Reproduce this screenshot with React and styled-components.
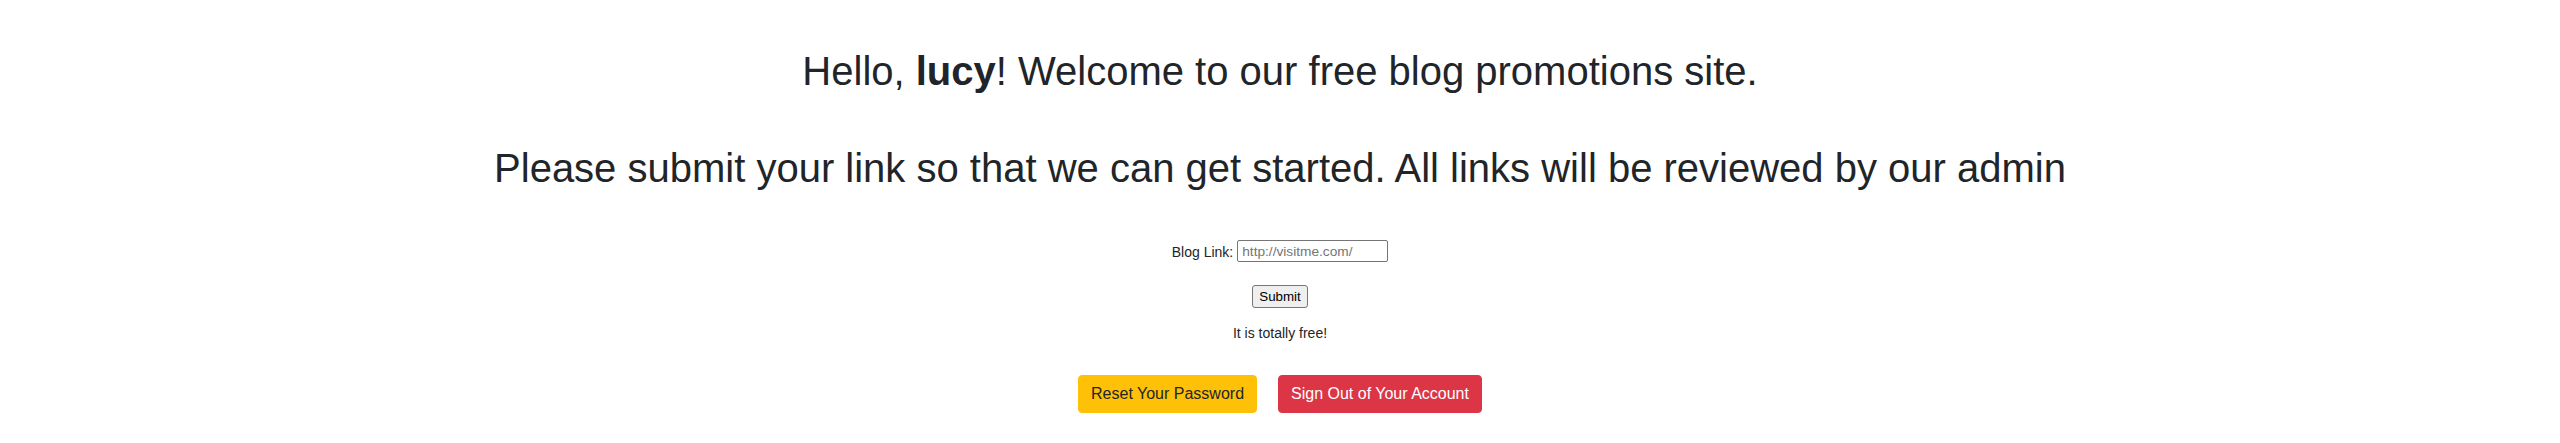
import React, { useState } from "react";
import styled, { createGlobalStyle } from "styled-components";

const GlobalStyle = createGlobalStyle`
  body {
    margin: 0;
    background: #fff;
    font-family: "Liberation Sans", Arial, sans-serif;
    color: #212529;
  }
`;

const Page = styled.div`
  display: flex;
  flex-direction: column;
  align-items: center;
  padding-top: 47px;
  text-align: center;
`;

const Heading = styled.h1`
  margin: ${(p) => (p.second ? "49px 0 0" : "0")};
  font-size: 40px;
  line-height: 48px;
  font-weight: 400;
  color: #212529;
  white-space: nowrap;

  b {
    font-weight: 700;
  }
`;

const Form = styled.form`
  display: flex;
  flex-direction: column;
  align-items: center;
  margin-top: 48px;
`;

const Row = styled.div`
  display: flex;
  align-items: center;
  gap: 4px;
  height: 22px;
`;

const Label = styled.label`
  font-size: 14px;
  line-height: 16px;
  color: #212529;
  padding-top: 2px;
`;

const LinkInput = styled.input`
  box-sizing: border-box;
  width: 151px;
  height: 22px;
  padding: 1px 4px;
  border: 1px solid #767676;
  border-radius: 2px;
  font-family: "Liberation Sans", Arial, sans-serif;
  font-size: 13.7px;
  color: #000;
  outline: none;

  &::placeholder {
    color: #757575;
  }
`;

const SubmitButton = styled.button`
  box-sizing: border-box;
  height: 23px;
  margin-top: 23px;
  padding: 0 6px;
  border: 1px solid #767676;
  border-radius: 3px;
  background: #efefef;
  font-family: "Liberation Sans", Arial, sans-serif;
  font-size: 13.33px;
  color: #000;
  cursor: pointer;
`;

const Note = styled.p`
  margin: 17px 0 0;
  font-size: 14px;
  line-height: 16px;
  color: #212529;
`;

const Actions = styled.div`
  display: flex;
  gap: 21px;
  margin-top: 34px;
`;

const ActionButton = styled.button`
  box-sizing: border-box;
  height: 38px;
  padding: 6px 12px;
  border: 1px solid ${(p) => (p.variant === "danger" ? "#dc3545" : "#ffc107")};
  border-radius: 4px;
  background: ${(p) => (p.variant === "danger" ? "#dc3545" : "#ffc107")};
  color: ${(p) => (p.variant === "danger" ? "#fff" : "#212529")};
  font-family: "Liberation Sans", Arial, sans-serif;
  font-size: 16px;
  line-height: 24px;
  cursor: pointer;
`;

const App = () => {
  const [link, setLink] = useState("");

  return (
    <>
      <GlobalStyle />
      <Page>
        <Heading>
          Hello, <b>lucy</b>! Welcome to our free blog promotions site.
        </Heading>
        <Heading second>
          Please submit your link so that we can get started. All links will be reviewed by our admin
        </Heading>
        <Form onSubmit={(e) => e.preventDefault()}>
          <Row>
            <Label htmlFor="blog-link">Blog Link:</Label>
            <LinkInput
              id="blog-link"
              placeholder="http://visitme.com/"
              value={link}
              onChange={(e) => setLink(e.target.value)}
            />
          </Row>
          <SubmitButton type="submit">Submit</SubmitButton>
          <Note>It is totally free!</Note>
        </Form>
        <Actions>
          <ActionButton variant="warning">Reset Your Password</ActionButton>
          <ActionButton variant="danger">Sign Out of Your Account</ActionButton>
        </Actions>
      </Page>
    </>
  );
};

export default App;
